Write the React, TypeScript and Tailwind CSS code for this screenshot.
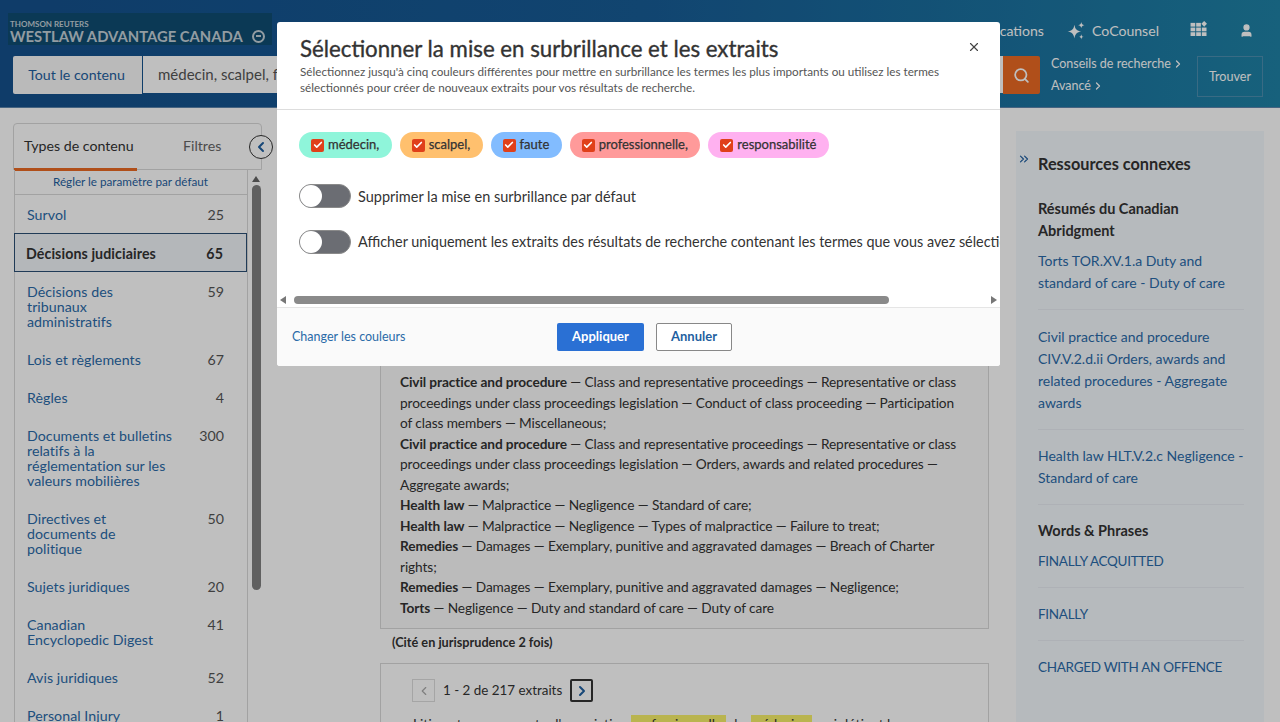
import { Search, X, ChevronLeft, ChevronRight, ChevronsRight, User, Check } from "lucide-react";

const font = "font-['Lato','Noto_Sans',sans-serif]";

const rows: { label: string[]; n: number; h: string; active?: boolean }[] = [
  { label: ["Survol"], n: 25, h: "h-[38px]" },
  { label: ["Décisions judiciaires"], n: 65, h: "h-[39px]", active: true },
  { label: ["Décisions des", "tribunaux", "administratifs"], n: 59, h: "h-[68px]" },
  { label: ["Lois et règlements"], n: 67, h: "h-[38px]" },
  { label: ["Règles"], n: 4, h: "h-[38px]" },
  { label: ["Documents et bulletins", "relatifs à la", "réglementation sur les", "valeurs mobilières"], n: 300, h: "h-[83px]" },
  { label: ["Directives et", "documents de", "politique"], n: 50, h: "h-[68px]" },
  { label: ["Sujets juridiques"], n: 20, h: "h-[38px]" },
  { label: ["Canadian", "Encyclopedic Digest"], n: 41, h: "h-[53px]" },
  { label: ["Avis juridiques"], n: 52, h: "h-[38px]" },
  { label: ["Personal Injury"], n: 1, h: "h-[38px]" },
];

const para: [string, string][] = [
  ["Civil practice and procedure", " — Class and representative proceedings — Representative or class proceedings under class proceedings legislation — Conduct of class proceeding — Participation of class members — Miscellaneous;"],
  ["Civil practice and procedure", " — Class and representative proceedings — Representative or class proceedings under class proceedings legislation — Orders, awards and related procedures — Aggregate awards;"],
  ["Health law", " — Malpractice — Negligence — Standard of care;"],
  ["Health law", " — Malpractice — Negligence — Types of malpractice — Failure to treat;"],
  ["Remedies", " — Damages — Exemplary, punitive and aggravated damages — Breach of Charter rights;"],
  ["Remedies", " — Damages — Exemplary, punitive and aggravated damages — Negligence;"],
  ["Torts", " — Negligence — Duty and standard of care — Duty of care"],
];

const chips = [
  { t: "médecin,", c: "bg-[#8ff5da]" },
  { t: "scalpel,", c: "bg-[#ffc06e]" },
  { t: "faute", c: "bg-[#82bcff]" },
  { t: "professionnelle,", c: "bg-[#ff9a9a]" },
  { t: "responsabilité", c: "bg-[#ffb1f0]" },
];

function Toggle() {
  return (
    <span className="w-[52px] h-[24px] rounded-full bg-[#6b6d73] border border-[#8a8a8a] flex items-center shrink-0">
      <span className="w-[22px] h-[22px] rounded-full bg-white" />
    </span>
  );
}

function Link({ children, caps }: { children: React.ReactNode; caps?: boolean }) {
  return (
    <div className={`text-[#2a6aa8] leading-[22px] whitespace-pre-line ${caps ? "text-[13.5px] tracking-[-0.3px]" : "text-[14px]"}`}>
      {children}
    </div>
  );
}

export default function App() {
  return (
    <div className={`${font} relative w-[1280px] h-[722px] overflow-hidden bg-white text-[#333]`}>
      {/* Header */}
      <header className="h-[108px] bg-gradient-to-r from-[#14508c] via-[#175c96] to-[#1f82a6] border-b border-[#5e86ad] flex flex-col">
        <div className="h-[56px] flex items-start justify-between">
          <div className="ml-[8px] mt-[13px] w-[264px] h-[32px] bg-[#0f4d72] text-[#c3d0d8] flex flex-col pl-[2px]">
            <span className="text-[8px] font-bold leading-[8px] mt-[7px]">THOMSON REUTERS</span>
            <span className="text-[14.8px] leading-[16px] font-bold whitespace-nowrap flex items-center">
              WESTLAW ADVANTAGE CANADA
              <span className="ml-[9px] w-[13px] h-[13px] rounded-full border-2 border-[#c3d0d8] flex items-center justify-center">
                <span className="w-[5px] h-[1.5px] bg-[#c3d0d8]" />
              </span>
            </span>
          </div>
          <div className="flex items-center mt-[20px] text-white text-[14.1px] mr-[26px]">
            <span>Notifications</span>
            <svg className="ml-[23px]" width="18" height="18" viewBox="0 0 17 17" fill="white">
              <path d="M7 2.5C7.8 6.8 9.2 8.2 13.5 9C9.2 9.8 7.8 11.2 7 15.5C6.2 11.2 4.8 9.8 0.5 9C4.8 8.2 6.2 6.8 7 2.5Z" />
              <path d="M13.5 0C13.8 2 14.5 2.7 16.5 3C14.5 3.3 13.8 4 13.5 6C13.2 4 12.5 3.3 10.5 3C12.5 2.7 13.2 2 13.5 0Z" />
              <path d="M13.5 11.5C13.7 13.1 14.4 13.8 16 14C14.4 14.2 13.7 14.9 13.5 16.5C13.3 14.9 12.6 14.2 11 14C12.6 13.8 13.3 13.1 13.5 11.5Z" />
            </svg>
            <span className="ml-[7px]">CoCounsel</span>
            <svg className="ml-[31px] -mt-[5px]" width="18" height="15" viewBox="0 0 18 16" fill="white">
              <rect x="0" y="2" width="5" height="4" />
              <rect x="6" y="2" width="5" height="4" />
              <path d="M14.5 0l3 3-3 3-3-3z" />
              <rect x="0" y="7" width="5" height="4" />
              <rect x="6" y="7" width="5" height="4" />
              <rect x="12" y="7" width="5" height="4" />
              <rect x="0" y="12" width="5" height="4" />
              <rect x="6" y="12" width="5" height="4" />
              <rect x="12" y="12" width="5" height="4" />
            </svg>
            <User className="ml-[31px] w-[15px] h-[15px]" fill="white" />
          </div>
        </div>
        <div className="flex items-start pl-[13px]">
          <div className="w-[129px] h-[38px] bg-[#f8f8f8] rounded-l-[2px] text-[#1f5fa0] text-[14.2px] flex items-center justify-center pr-[2px]">
            Tout le contenu
          </div>
          <div className="ml-[1px] w-[860px] h-[37px] bg-white text-[#555] text-[15px] flex items-center pl-[15px]">
            médecin, scalpel, faute professionnelle, responsabilité
          </div>
          <div className="w-[37px] h-[38px] bg-[#eb6a23] rounded-r-[2px] flex items-center justify-center">
            <Search className="w-[17px] h-[17px] text-white" strokeWidth={2.5} />
          </div>
          <div className="ml-[11px] -mt-[3px] text-white text-[12.5px] leading-[22px]">
            <div className="flex items-center">Conseils de recherche<ChevronRight className="w-[12px] h-[12px] ml-[1px]" strokeWidth={2.5} /></div>
            <div className="flex items-center">Avancé<ChevronRight className="w-[12px] h-[12px] ml-[1px]" strokeWidth={2.5} /></div>
          </div>
          <div className="ml-auto mr-[17px] w-[66px] h-[41px] border border-[#4d8fb0] text-white text-[12.6px] pt-[1px] flex items-center justify-center">
            Trouver
          </div>
        </div>
      </header>

      {/* Main */}
      <div className="flex items-start">
        {/* Left */}
        <aside className="ml-[13px] mt-[15px] w-[249px] relative">
          <div className="h-[47px] border border-[#d8d8d8] rounded-t-[4px] flex">
            <div className="w-[123px] h-[47px] border-b-[3px] border-[#eb6a23] text-[14.2px] text-[#333] flex items-center pl-[10px] whitespace-nowrap">
              Types de contenu
            </div>
            <div className="ml-[46px] text-[14.2px] text-[#666] flex items-center h-[44px]">Filtres</div>
          </div>
          <span className="absolute left-[236px] top-[12px] w-[24px] h-[24px] rounded-full border border-[#333] bg-white flex items-center justify-center">
            <ChevronLeft className="w-[16px] h-[16px] text-[#1f5fa0]" strokeWidth={3} />
          </span>
          <div className="flex">
            <div className="w-[234px] ml-[1px] border-l border-r border-[#d8d8d8]">
              <div className="h-[25px] border-b border-[#d8d8d8] text-[11.7px] text-[#1f5fa0] pb-[1px] pr-[1px] flex items-center justify-center">
                Régler le paramètre par défaut
              </div>
              {rows.map((r) => (
                <div
                  key={r.label[0]}
                  className={`${r.h} flex justify-between pr-[23px] text-[14.2px] leading-[15px] ${
                    r.active
                      ? "-ml-[1px] pl-[11px] pt-[1px] bg-[#f0f4f9] border border-[#2b4f74] font-bold text-[#333] items-center tracking-[0.1px]"
                      : "pl-[12px] text-[#2a6aa8] pt-[12px] tracking-[0.05px]"
                  }`}
                >
                  <span>
                    {r.label.map((l) => (
                      <div key={l} className="whitespace-nowrap">{l}</div>
                    ))}
                  </span>
                  <span className={r.active ? "text-[#333]" : "text-[#555]"}>{r.n}</span>
                </div>
              ))}
            </div>
            <div className="ml-[3px] w-[10px] flex flex-col items-center">
              <span className="mt-[6px] w-0 h-0 border-l-[4px] border-r-[4px] border-b-[6px] border-transparent border-b-[#666]" />
              <span className="mt-[3px] w-[9px] h-[405px] rounded-full bg-[#808080]" />
            </div>
          </div>
        </aside>

        {/* Center */}
        <main className="ml-[118px] w-[609px] mt-[232px] text-[13.7px] text-[#333]">
          <div className="h-[289px] border border-[#d8d8d8] bg-[#fafafa] pt-[31px] pl-[19px] pr-[20px] leading-[20.5px] tracking-[-0.1px]">
            {para.map((p, i) => (
              <div key={i}>
                <b className="font-bold">{p[0]}</b>
                {p[1]}
              </div>
            ))}
          </div>
          <div className="mt-[4px] ml-[12px] text-[12.7px] font-bold leading-[18px]">(Cité en jurisprudence 2 fois)</div>
          <div className="mt-[12px] h-[100px] border border-[#d8d8d8] pl-[31px] pt-[15px]">
            <div className="flex items-center">
              <span className="w-[23px] h-[23px] border border-[#ddd] flex items-center justify-center">
                <ChevronLeft className="w-[14px] h-[14px] text-[#aaa]" />
              </span>
              <span className="ml-[8px] text-[13.4px]">1 - 2 de 217 extraits</span>
              <span className="ml-[8px] w-[23px] h-[23px] border-2 border-[#333] rounded-[2px] flex items-center justify-center">
                <ChevronRight className="w-[16px] h-[16px] text-[#1f5fa0]" strokeWidth={3} />
              </span>
            </div>
            <div className="mt-[12px] ml-[1px] whitespace-nowrap">
              Litige et recours contre l'association <mark className="bg-[#f7f06a] text-[#333] pr-[4px]">professionnelle</mark> des <mark className="bg-[#f7f06a] text-[#333] -ml-[3px] pr-[10px]">médecin</mark>, qui détient la
            </div>
          </div>
        </main>

        {/* Right */}
        <aside className="ml-[27px] mt-[23px] w-[248px] h-[640px] bg-[#f3f8fd] pl-[22px] pr-[20px] relative">
          <ChevronsRight className="absolute left-[1px] top-[21px] w-[14px] h-[14px] text-[#1f5fa0]" />
          <div className="pt-[22px] text-[16.3px] font-bold leading-[22px]">Ressources connexes</div>
          <div className="mt-[23px] text-[14.5px] font-bold leading-[22px]">Résumés du Canadian Abridgment</div>
          <div className="mt-[8px] pb-[15px] border-b border-[#e8edf3]"><Link>Torts TOR.XV.1.a Duty and standard of care - Duty of care</Link></div>
          <div className="mt-[16px] pb-[15px] border-b border-[#e8edf3]"><Link>Civil practice and procedure CIV.V.2.d.ii Orders, awards and related procedures - Aggregate awards</Link></div>
          <div className="mt-[15px] pb-[15px] border-b border-[#e8edf3]"><Link>Health law HLT.V.2.c Negligence - Standard of care</Link></div>
          <div className="mt-[15px] text-[14.5px] font-bold leading-[22px]">Words &amp; Phrases</div>
          <div className="mt-[8px] pb-[15px] border-b border-[#e8edf3]"><Link caps>FINALLY ACQUITTED</Link></div>
          <div className="mt-[15px] pb-[15px] border-b border-[#e8edf3]"><Link caps>FINALLY</Link></div>
          <div className="mt-[15px]"><Link caps>CHARGED WITH AN OFFENCE</Link></div>
        </aside>
      </div>

      {/* Dim overlay */}
      <div className="absolute inset-0 bg-black/25" />

      {/* Modal */}
      <div className="absolute left-[277px] top-[22px] w-[723px] h-[344px] bg-white rounded-[3px] flex flex-col overflow-hidden">
        <div className="h-[88px] border-b border-[#ddd] pl-[23px] pr-[48px] relative shrink-0">
          <h1 className="pt-[13px] text-[22.25px] font-normal leading-[28px] text-[#333] whitespace-nowrap [-webkit-text-stroke:0.35px_#333]">
            Sélectionner la mise en surbrillance et les extraits
          </h1>
          <p className="mt-[0px] text-[11.7px] leading-[16px] text-[#555]">
            Sélectionnez jusqu'à cinq couleurs différentes pour mettre en surbrillance les termes les plus importants ou utilisez les termes sélectionnés pour créer de nouveaux extraits pour vos résultats de recherche.
          </p>
          <X className="absolute right-[19px] top-[18px] w-[14px] h-[14px] text-[#444]" />
        </div>
        <div className="flex-1 overflow-hidden pl-[22px] pt-[22px]">
          <div className="flex gap-[8px]">
            {chips.map((c) => (
              <span key={c.t} className={`${c.c} h-[26px] rounded-full pl-[12px] pr-[12.4px] flex items-center text-[13px] text-[#333] whitespace-nowrap [-webkit-text-stroke:0.25px_#333]`}>
                <span className="w-[13px] h-[13px] bg-[#e0401a] rounded-[2px] flex items-center justify-center mr-[4px]">
                  <Check className="w-[10px] h-[10px] text-white" strokeWidth={4} />
                </span>
                {c.t}
              </span>
            ))}
          </div>
          <div className="mt-[26px] flex items-center gap-[7px] text-[14.5px] text-[#333] whitespace-nowrap">
            <Toggle />
            <span className="mt-[1px]">Supprimer la mise en surbrillance par défaut</span>
          </div>
          <div className="mt-[22px] flex items-center gap-[7px] text-[14.4px] text-[#333] whitespace-nowrap">
            <Toggle />
            Afficher uniquement les extraits des résultats de recherche contenant les termes que vous avez sélectionnés
          </div>
        </div>
        <div className="h-[14px] flex items-center px-[3px] shrink-0">
          <span className="w-0 h-0 border-t-[4px] border-b-[4px] border-r-[6px] border-transparent border-r-[#777]" />
          <span className="ml-[8px] w-[595px] h-[8px] rounded-full bg-[#8a8a8a]" />
          <span className="ml-auto w-0 h-0 border-t-[4px] border-b-[4px] border-l-[6px] border-transparent border-l-[#777]" />
        </div>
        <div className="h-[59px] bg-[#fafafa] border-t border-[#e5e5e5] flex items-center pl-[15px] shrink-0">
          <span className="text-[12.5px] text-[#2a6aa8] w-[265px]">Changer les couleurs</span>
          <span className="w-[87px] h-[28px] rounded-[2px] bg-[#2a70d4] text-white text-[13px] font-bold flex items-center justify-center">Appliquer</span>
          <span className="ml-[12px] w-[76px] h-[28px] rounded-[2px] bg-white border border-[#888] text-[#1f5fa0] text-[13px] font-bold flex items-center justify-center">Annuler</span>
        </div>
      </div>
    </div>
  );
}
